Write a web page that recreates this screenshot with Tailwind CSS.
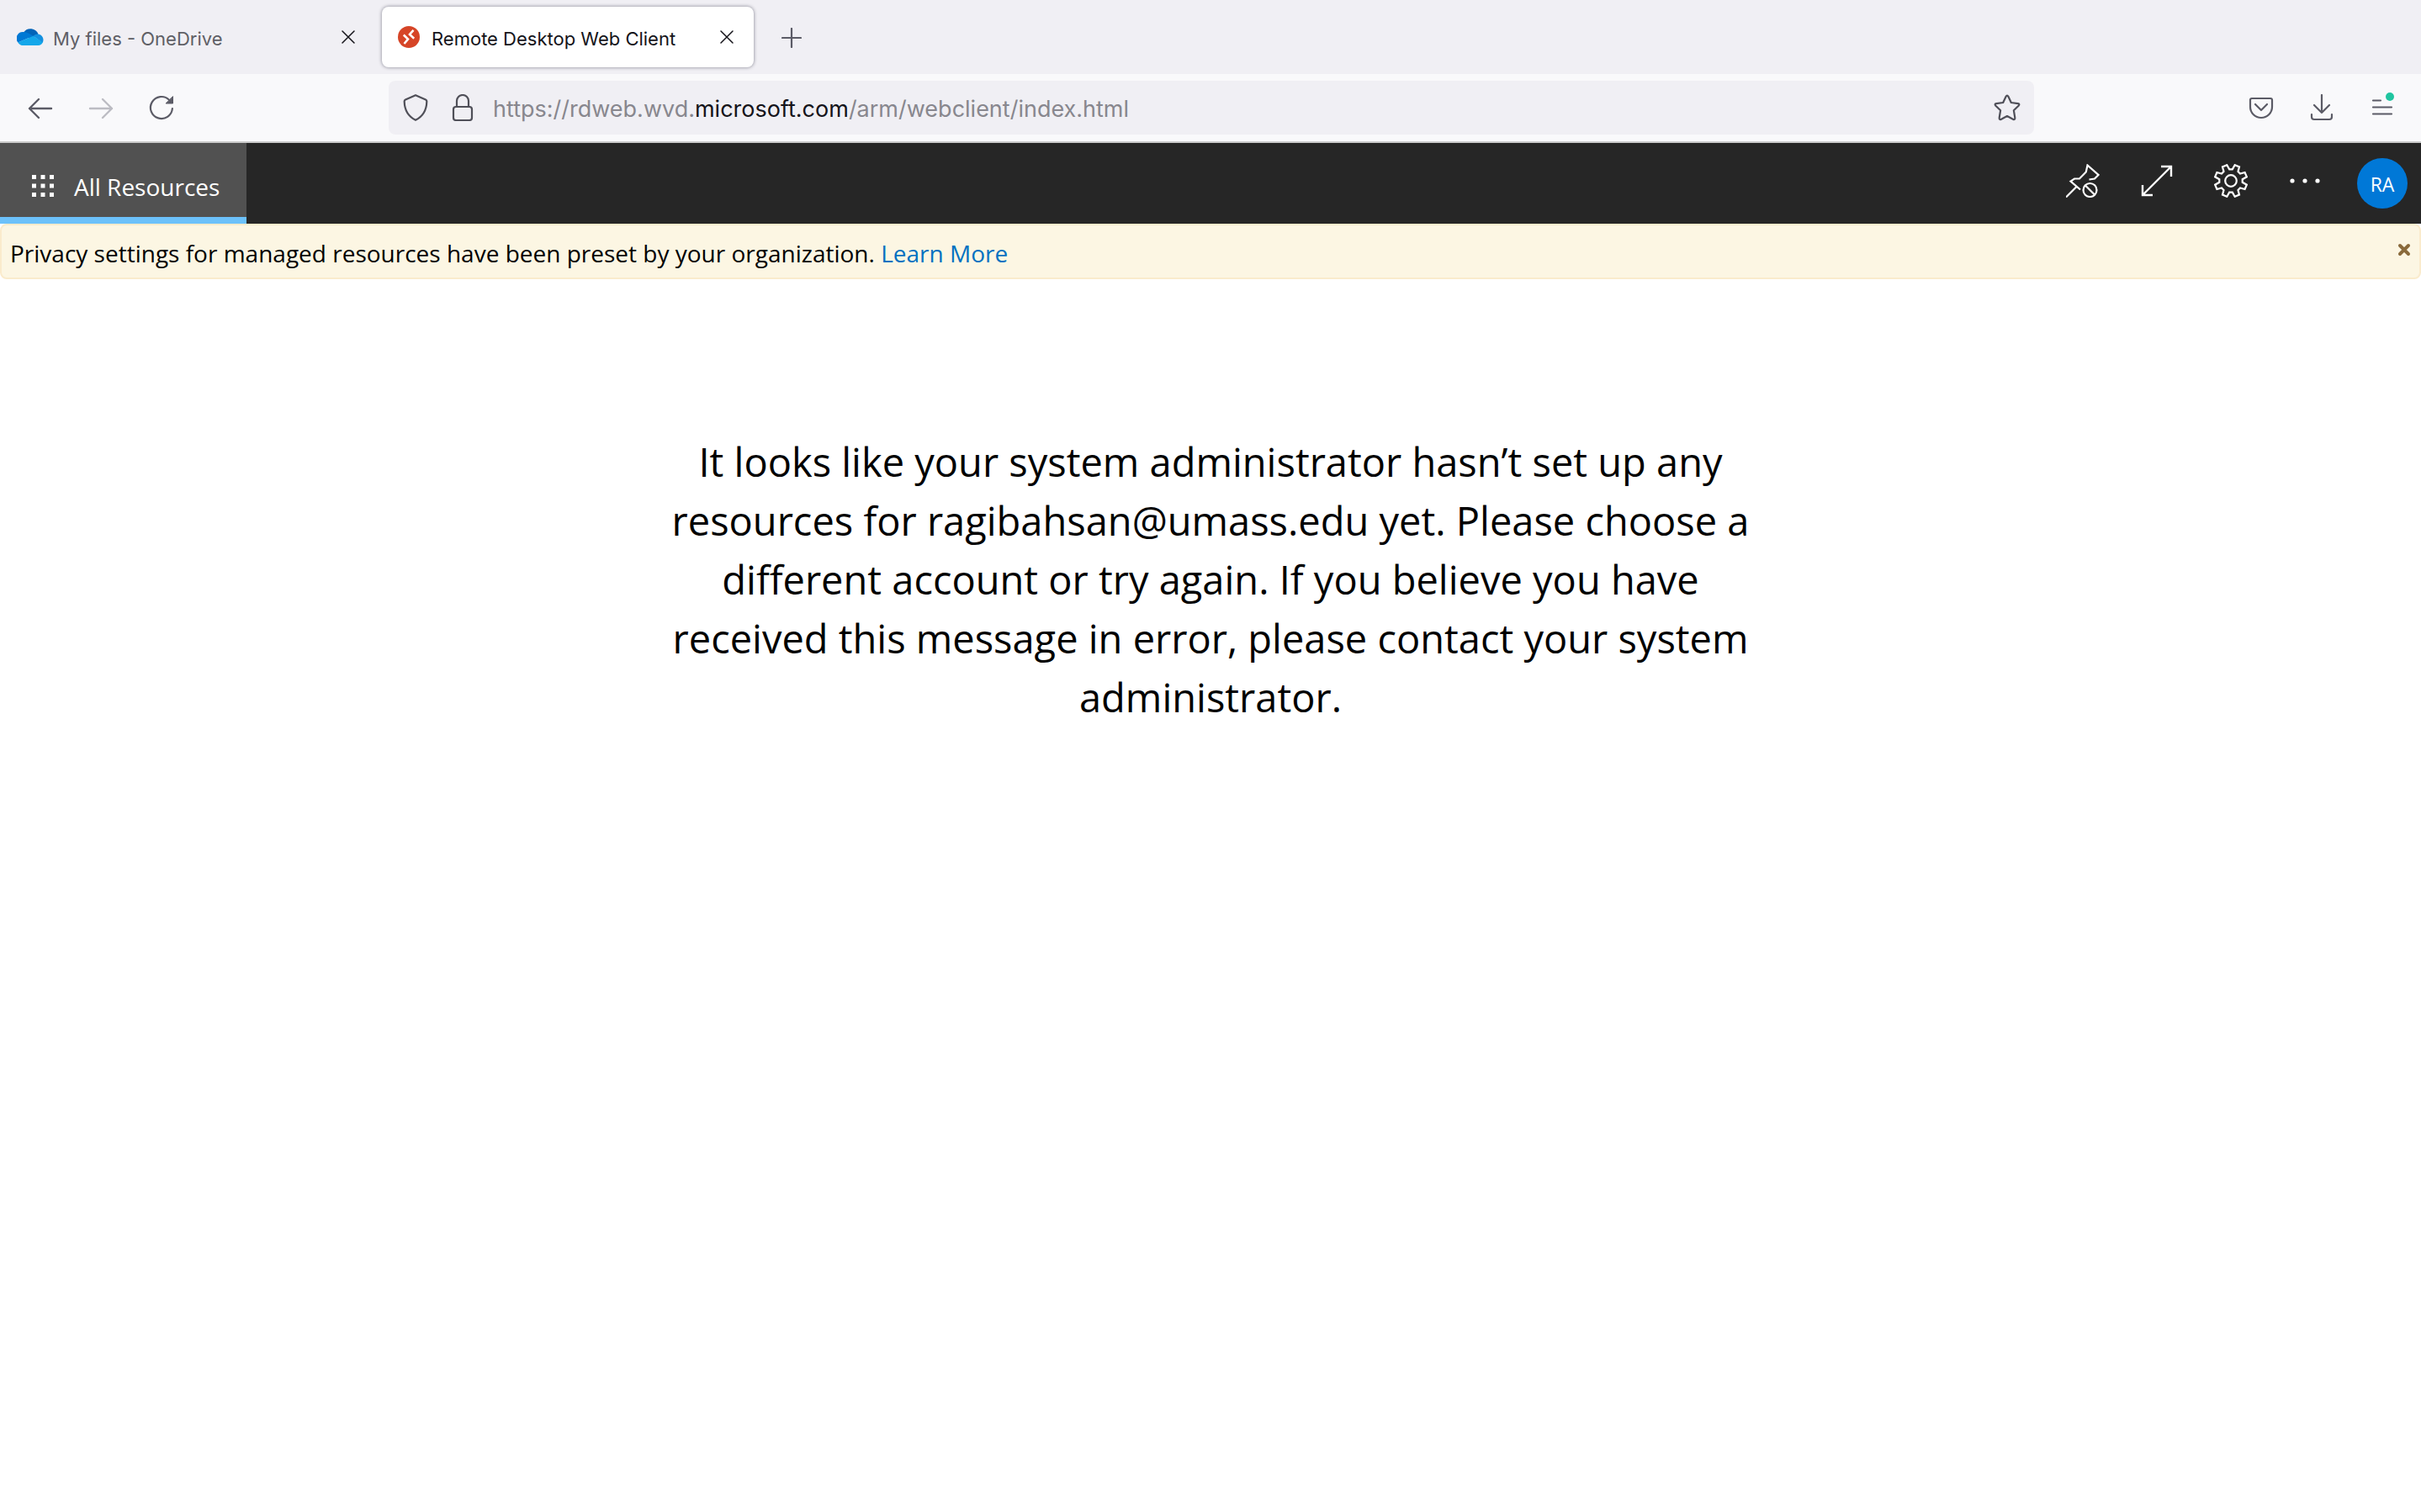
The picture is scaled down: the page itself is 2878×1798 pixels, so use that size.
<!DOCTYPE html>
<html lang="en">
<head>
<meta charset="utf-8">
<title>Remote Desktop Web Client</title>
<script src="https://cdn.jsdelivr.net/npm/@tailwindcss/browser@4"></script>
</head>
<body class="min-h-screen bg-white font-['Open_Sans','Noto_Sans',sans-serif] text-black">

<!-- Browser tab strip -->
<div class="flex h-[88px] items-center bg-[#f0eff4] font-['Inter',sans-serif] text-[22px] leading-8">
  <div class="flex h-[72px] w-[454px] items-center pr-5 pl-5 text-[#5f5f66]">
    <svg class="h-[22px] w-8 shrink-0" viewBox="0 0 32 22" aria-hidden="true">
      <path fill="#0364b8" d="M8 5.500A10 10 0 0 1 25.500 7.500L17 13 7 9z"/>
      <path fill="#0078d4" d="M7.500 5A7.500 7.500 0 0 0 1.500 17.500L19.500 9.700 14 6.500A10 10 0 0 0 7.500 5z"/>
      <path fill="#1490df" d="M25.500 7.500A7 7 0 0 1 30.500 18L19.500 9.700A8 8 0 0 1 25.500 7.500z"/>
      <path fill="#14a7ea" d="M19.500 9.700L30.800 17.500A6 6 0 0 1 25.500 21H8A8 8 0 0 1 1.200 17.400z"/>
    </svg>
    <span class="ml-[11px] grow pt-[3px]">My files - OneDrive</span>
    <button class="flex size-10 items-center justify-center" aria-label="Close My files tab">
      <svg class="size-4" viewBox="0 0 16 16" fill="none" stroke="#15141a" stroke-width="1.500" stroke-linecap="round"><path d="M1 1l14 14M15 1L1 15"/></svg>
    </button>
  </div>
  <div class="flex h-[72px] w-[442px] items-center rounded-lg bg-white pr-3 pl-[19px] text-[#15141a] shadow-[0_0_4px_#80808e]">
    <svg class="size-[26px] shrink-0" viewBox="0 0 26 26" aria-hidden="true">
      <circle cx="13" cy="13" r="13" fill="#d64527"/>
      <path d="M6.800 10.500l5.200 5-4.500 5.500M18.500 4.800l-4.500 5.200 5.200 4.800" fill="none" stroke="#fff" stroke-width="2.600"/>
    </svg>
    <span class="ml-[14px] grow pt-[3px]">Remote Desktop Web Client</span>
    <button class="flex size-10 items-center justify-center" aria-label="Close Remote Desktop tab">
      <svg class="size-4" viewBox="0 0 16 16" fill="none" stroke="#15141a" stroke-width="1.500" stroke-linecap="round"><path d="M1 1l14 14M15 1L1 15"/></svg>
    </button>
  </div>
  <button class="ml-[25px] flex size-10 items-center justify-center pt-[2px]" aria-label="New tab">
    <svg class="size-6" viewBox="0 0 24 24" fill="none" stroke="#5b5b66" stroke-width="2.200" stroke-linecap="round"><path d="M12 1v22M1 12h22"/></svg>
  </button>
</div>

<!-- Navigation toolbar -->
<div class="flex h-[82px] items-center border-b-2 border-[#cccccc] bg-[#f9f9fb] pr-4 font-['Inter',sans-serif]">
  <div class="flex w-[462px] items-center gap-8 pl-7">
    <button class="flex size-10 items-center justify-center" aria-label="Back">
      <svg class="size-8" viewBox="0 0 32 32" fill="none" stroke="#5b5b66" stroke-width="2.400" stroke-linecap="round" stroke-linejoin="round"><path d="M29 17H3M14 6L3 17l11 11"/></svg>
    </button>
    <button class="flex size-10 items-center justify-center" aria-label="Forward" disabled>
      <svg class="size-8" viewBox="0 0 32 32" fill="none" stroke="#bcbcc3" stroke-width="2.400" stroke-linecap="round" stroke-linejoin="round"><path d="M3 17h26M18 6l11 11-11 11"/></svg>
    </button>
    <button class="flex size-10 items-center justify-center" aria-label="Reload">
      <svg class="size-8" viewBox="0 0 32 32" fill="none" stroke="#5b5b66" stroke-width="2.200" stroke-linecap="round"><path d="M28.900 17A13 13 0 1 1 25 6.700"/><path d="M29.500 3v8h-8z" fill="#5b5b66" stroke-width="1"/></svg>
    </button>
  </div>
  <div class="flex h-16 w-[1956px] min-w-0 shrink items-center rounded-lg bg-[#f0eff4] pr-3 pl-3">
    <button class="flex size-10 items-center justify-center" aria-label="Tracking protection">
      <svg class="size-8" viewBox="0 0 32 32" fill="none" stroke="#4f4f58" stroke-width="2.200" stroke-linejoin="round"><path d="M16 1.200L28 6.500Q29.500 7.200 29.300 9C29 19 25.500 26 16 30.800 6.500 26 3 19 2.700 9Q2.500 7.200 4 6.500z"/></svg>
    </button>
    <button class="ml-4 flex size-10 items-center justify-center" aria-label="Site information">
      <svg class="size-8" viewBox="0 0 32 32" fill="none" stroke="#4f4f58" stroke-width="2.200"><rect x="5" y="15" width="22" height="16" rx="3"/><path d="M9 15V8a7 7 0 0 1 14 0v7"/></svg>
    </button>
    <div class="ml-4 min-w-0 grow overflow-hidden pt-[3px] text-[27px] leading-10 whitespace-nowrap text-[#88878e]" role="textbox" aria-label="Address" contenteditable="true" spellcheck="false">https://rdweb.wvd.<span class="text-[#15141a]">microsoft.com</span>/arm/webclient/index.html</div>
    <button class="flex size-10 items-center justify-center" aria-label="Bookmark this page">
      <svg class="size-8" viewBox="0 0 32 32" fill="none" stroke="#4f4f58" stroke-width="2.200" stroke-linejoin="round"><path d="M14.600 2.800Q16 .300 17.400 2.800L20.800 10 28.800 11.100Q31.500 11.600 29.600 13.700L23.900 19.300 25.300 28Q25.500 31 22.900 29.700L16 26 9.100 29.700Q6.500 31 6.700 28L8.100 19.300 2.400 13.700Q.500 11.600 3.200 11.100L11.200 10z"/></svg>
    </button>
  </div>
  <div class="ml-auto flex shrink-0 items-center gap-8 pr-[10px]">
    <button class="flex size-10 items-center justify-center" aria-label="Save to Pocket">
      <svg class="size-8" viewBox="0 0 32 32" fill="none" stroke="#5b5b66" stroke-width="2.200" stroke-linecap="round" stroke-linejoin="round"><path d="M5 5h22q2 0 2 2v8a13 13 0 0 1-26 0V7q0-2 2-2z"/><path d="M9 12l7 7 7-7"/></svg>
    </button>
    <button class="flex size-10 items-center justify-center" aria-label="Downloads">
      <svg class="size-8" viewBox="0 0 32 32" fill="none" stroke="#5b5b66" stroke-width="2.200" stroke-linecap="round" stroke-linejoin="round"><path d="M16 1v21M7 13l9 9 9-9M4 24v3q0 3 3 3h18q3 0 3-3v-3"/></svg>
    </button>
    <button class="flex size-10 items-center justify-center" aria-label="Open application menu">
      <svg class="size-8 overflow-visible" viewBox="0 0 32 32" fill="none" stroke="#5b5b66" stroke-width="2.200" stroke-linecap="round"><path d="M5 7.500h9M5 15.500h22M5 23.500h22"/><circle cx="25" cy="3" r="5" fill="#20c5a0" stroke="none"/></svg>
    </button>
  </div>
</div>

<!-- Web client header -->
<header class="flex h-24 bg-[#262626] text-white">
  <a href="#" class="flex w-[293px] items-center border-b-8 border-[#6cc1fa] bg-[#515151] pt-4 pl-[38px] text-[28px] leading-10" aria-current="page">
    <svg class="mr-6 mb-[2px] size-[26px] shrink-0" viewBox="0 0 26 26" fill="#fff" aria-hidden="true"><path d="M0 0h5v5H0zM10.500 0h5v5h-5zM21 0h5v5h-5zM0 10.500h5v5H0zM10.500 10.500h5v5h-5zM21 10.500h5v5h-5zM0 21h5v5H0zM10.500 21h5v5h-5zM21 21h5v5h-5z"/></svg>
    <span class="whitespace-nowrap">All Resources</span>
  </a>
  <div class="ml-auto flex items-center pr-4">
    <button class="flex h-[90px] w-22 items-center justify-center self-start" aria-label="Unpin">
      <svg class="size-10" viewBox="0 0 40 40" fill="none" stroke="#fff" stroke-width="2.200"><path d="M0 39.500L13 26.500M27.500 18.500L34 17.500 38.500 13 25.500 1.500 23.800 9.500 16 17.500 10 17.500 5.500 20.500 17 30.500"/><circle cx="28.500" cy="31" r="8"/><path d="M23 25.500l11 11"/></svg>
    </button>
    <button class="flex h-[90px] w-22 items-center justify-center self-start" aria-label="Full screen">
      <svg class="size-10" viewBox="0 0 40 40" fill="none" stroke="#fff" stroke-width="2.400"><path d="M3 37L37 3M25 3h12v12M3 25v12h12"/></svg>
    </button>
    <button class="flex h-[90px] w-22 items-center justify-center self-start" aria-label="Settings">
      <svg class="size-10" viewBox="0 0 40 40" fill="none" stroke="#fff" stroke-width="2.200"><circle cx="20" cy="20" r="6.800"/><path d="M15.300 1.200L18.200 6.300H21.800L24.700 1.200 30 3.400 28.500 9 31 11.500 36.600 10 38.800 15.300 33.700 18.200V21.800L38.800 24.700 36.600 30 31 28.500 28.500 31 30 36.600 24.700 38.800 21.800 33.700H18.200L15.300 38.800 10 36.600 11.500 31 9 28.500 3.400 30 1.200 24.700 6.300 21.800V18.200L1.200 15.300 3.400 10 9 11.500 11.500 9 10 3.400z"/></svg>
    </button>
    <button class="flex h-[90px] w-22 items-center justify-center self-start" aria-label="More">
      <svg class="size-10" viewBox="0 0 40 40" fill="#fff"><circle cx="5" cy="20" r="2.600"/><circle cx="20" cy="20" r="2.600"/><circle cx="35" cy="20" r="2.600"/></svg>
    </button>
    <button class="ml-[18px] flex size-[60px] items-center justify-center rounded-full bg-[#0078d7] pt-[2px] text-[23px] leading-8 font-medium" aria-label="Account RA">RA</button>
  </div>
</header>

<!-- Privacy notice -->
<div class="flex h-[66px] items-center rounded-lg border-2 border-[#faebcc] bg-[#fcf6e3] pr-[6px] pl-[10px]" role="status">
  <p class="grow pt-1 text-[28px] leading-10">Privacy settings for managed resources have been preset by your organization. <a href="#" class="text-[#0071c1]">Learn More</a></p>
  <button class="mt-[17px] flex size-6 items-center justify-center self-start" aria-label="Dismiss">
    <svg class="size-4" viewBox="0 0 16 16" fill="none" stroke="#8a6a3b" stroke-width="4" stroke-linecap="round"><path d="M3 3l10 10M13 3L3 13"/></svg>
  </button>
</div>

<main class="flex justify-center px-8 pt-[182px]">
  <p class="max-w-[1320px] text-center text-[47px] leading-[70px]">It looks like your system administrator hasn’t set up any resources for ragibahsan@umass.edu yet. Please choose a different account or try again. If you believe you have received this message in error, please contact your system administrator.</p>
</main>
</body>
</html>
